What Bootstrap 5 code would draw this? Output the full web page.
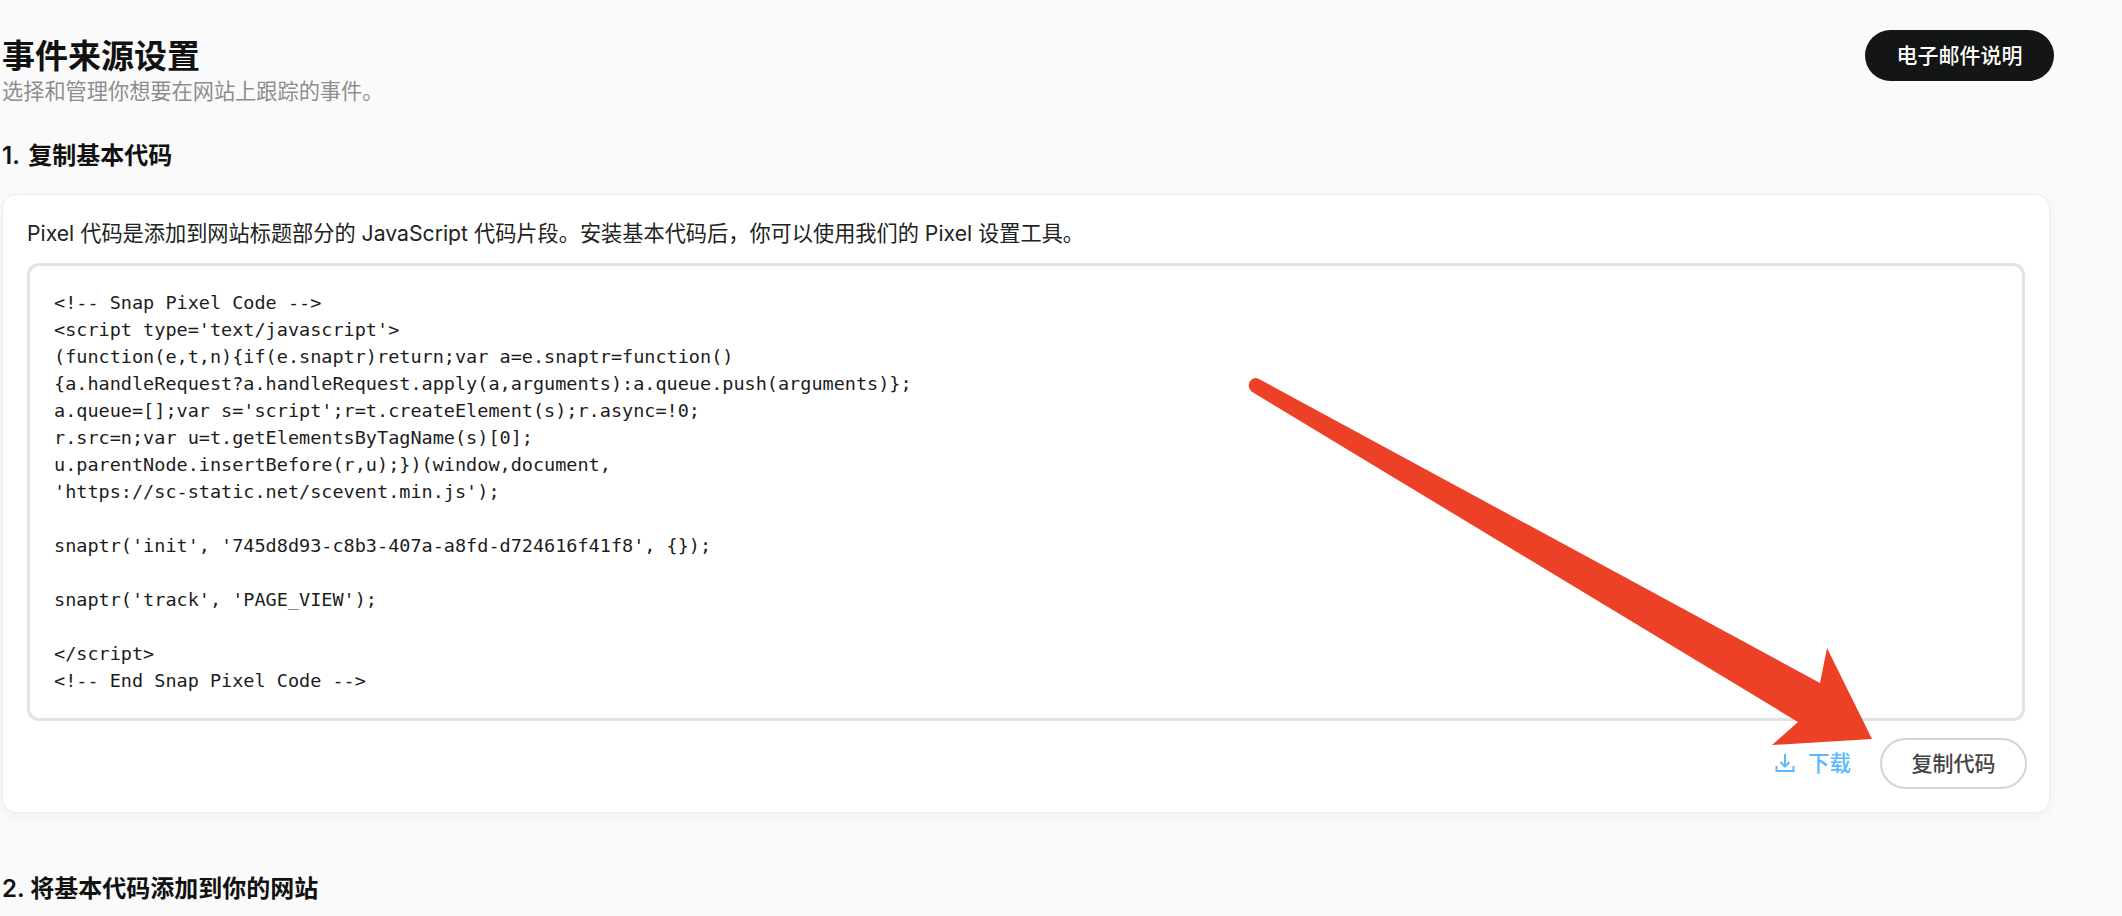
<!DOCTYPE html>
<html lang="zh">
<head>
<meta charset="utf-8">
<title>事件来源设置</title>
<link href="https://cdn.jsdelivr.net/npm/bootstrap@5.3.0/dist/css/bootstrap.min.css" rel="stylesheet">
<style>
html,body{height:916px;overflow:hidden}
body{background:#fafafa;color:#111;font-family:Inter,"Noto Sans CJK SC",sans-serif;position:relative}
.page-wrap{width:2048px;margin-left:2px;padding-top:30px}
.page-title{font-size:33px;line-height:40px;font-weight:600;margin:6px 0 0;color:#111}
.page-sub{font-size:21.2px;line-height:24px;color:#8e8e8e;margin:3px 0 0}
.btn-dark-pill{background:#141616;color:#fff;border:0;border-radius:26px;width:189px;height:51px;font-size:21px;font-weight:500;margin-right:-4px}
.step-title{font-size:24px;line-height:32px;font-weight:600;color:#111;margin:0}
.step-one{margin-top:37px;margin-bottom:22px;word-spacing:3px}
.code-card{background:#fff;border:1px solid #ececec;border-radius:14px;box-shadow:0 4px 14px rgba(0,0,0,.04);height:619px;padding:0 24px 0 24px}
.intro{font-size:21.2px;line-height:28px;color:#222;margin:24px 0 16px}
.code-box{height:458px;border:3px solid #e1e3e6;border-radius:12px;padding:23px 24px;margin:0;background:#fff;font-family:"DejaVu Sans Mono",monospace;font-size:18.5px;line-height:27px;color:#1c1c1c;overflow:hidden;white-space:pre}
.action-row{margin-top:17px;margin-right:-2px}
.dl-link{color:#5ab8ff;font-size:21.5px;font-weight:500;text-decoration:none;gap:13px;margin-right:29px}
.dl-icon{margin-top:-2px}
.btn-copy{width:147px;height:51px;border:2px solid #d4d4d4;border-radius:26px;background:#fff;color:#444;font-size:21px;font-weight:500;padding:0}
.step-two{margin-top:60px}
.arrow-layer{position:absolute;left:0;top:0;pointer-events:none}
</style>
</head>
<body>
<div class="page-wrap">
  <div class="d-flex justify-content-between align-items-start">
    <div>
      <h1 class="page-title">事件来源设置</h1>
      <p class="page-sub">选择和管理你想要在网站上跟踪的事件。</p>
    </div>
    <button class="btn btn-dark-pill" type="button">电子邮件说明</button>
  </div>
  <h2 class="step-title step-one">1. 复制基本代码</h2>
  <div class="code-card">
    <p class="intro">Pixel 代码是添加到网站标题部分的 JavaScript 代码片段。安装基本代码后，你可以使用我们的 Pixel 设置工具。</p>
    <pre class="code-box">&lt;!-- Snap Pixel Code --&gt;
&lt;script type='text/javascript'&gt;
(function(e,t,n){if(e.snaptr)return;var a=e.snaptr=function()
{a.handleRequest?a.handleRequest.apply(a,arguments):a.queue.push(arguments)};
a.queue=[];var s='script';r=t.createElement(s);r.async=!0;
r.src=n;var u=t.getElementsByTagName(s)[0];
u.parentNode.insertBefore(r,u);})(window,document,
'https://sc-static.net/scevent.min.js');

snaptr('init', '745d8d93-c8b3-407a-a8fd-d724616f41f8', {});

snaptr('track', 'PAGE_VIEW');

&lt;/script&gt;
&lt;!-- End Snap Pixel Code --&gt;</pre>
    <div class="action-row d-flex justify-content-end align-items-center">
      <a class="dl-link d-inline-flex align-items-center" href="#">
        <svg class="dl-icon" width="20" height="20" viewBox="0 0 20 20" fill="none" stroke="currentColor" stroke-width="2"><path d="M10 1v12M5.5 9l4.5 4.5L14.5 9M1.5 13v5h17v-5"/></svg>
        <span>下载</span>
      </a>
      <button class="btn btn-copy" type="button">复制代码</button>
    </div>
  </div>
  <h2 class="step-title step-two">2. 将基本代码添加到你的网站</h2>
</div>
<svg class="arrow-layer" width="2122" height="916" viewBox="0 0 2122 916">
  <path fill="#ec4126" d="M1258 378.5Q1255 377 1251 380Q1248 383 1249 387Q1250 391 1254 393L1798 722L1772 745L1872 739L1827 648L1820 683Z"/>
</svg>
</body>
</html>
